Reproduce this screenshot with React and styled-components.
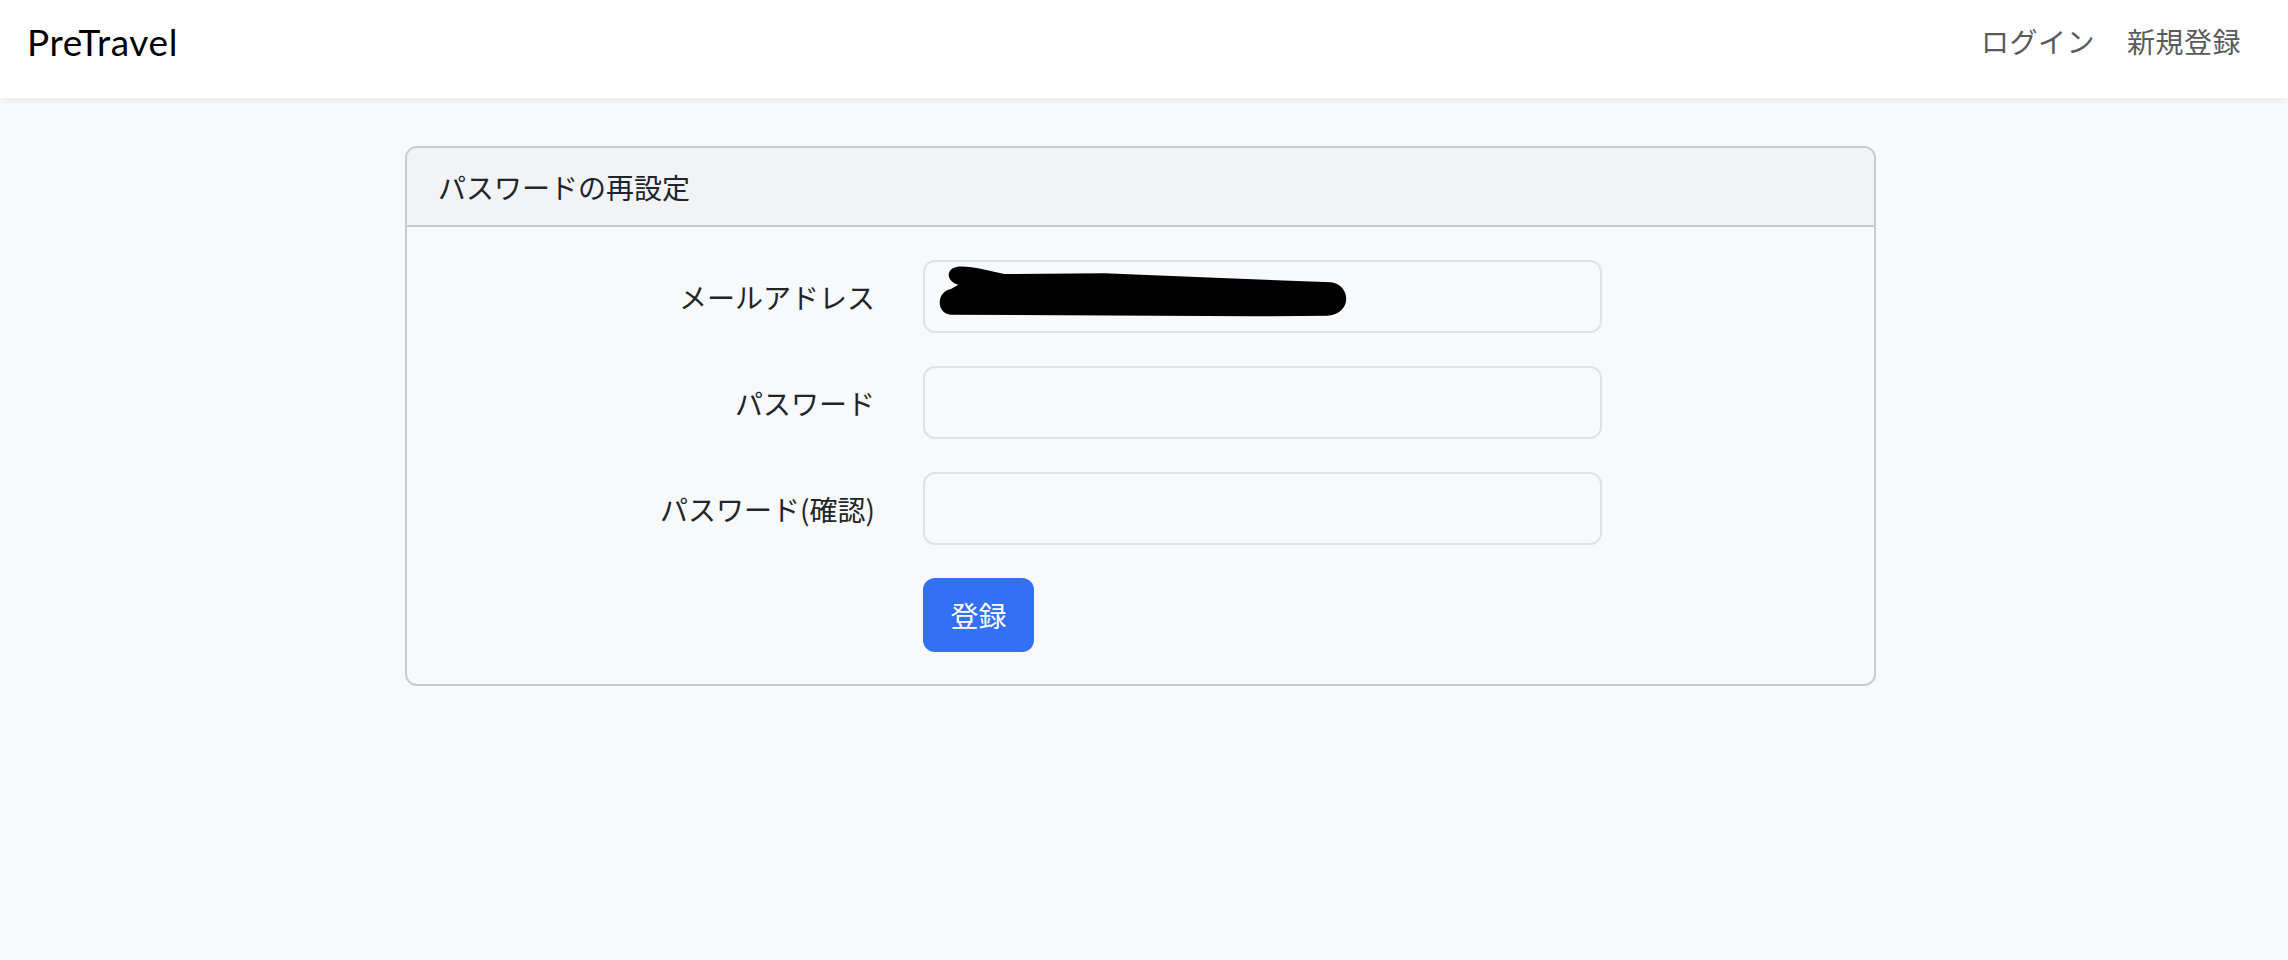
import React from "react";
import styled, { createGlobalStyle } from "styled-components";

const GlobalStyle = createGlobalStyle`
  html, body {
    margin: 0;
    padding: 0;
    background: #f8f9fb;
    font-family: "Noto Sans CJK JP", "Noto Sans", sans-serif;
    color: #212529;
  }
  * {
    box-sizing: border-box;
  }
`;

const Navbar = styled.nav`
  height: 98px;
  padding: 0 31px 16px 27px;
  background: #fff;
  display: flex;
  align-items: center;
  justify-content: space-between;
  box-shadow: 0 2px 8px rgba(0, 0, 0, 0.08);
  position: relative;
`;

const Brand = styled.a`
  font-family: "Lato", "Noto Sans", sans-serif;
  font-size: 37px;
  letter-spacing: 0.6px;
  color: #000;
  text-decoration: none;
  line-height: 1;
`;

const NavLinks = styled.div`
  display: flex;
  align-items: center;
`;

const NavLink = styled.a`
  font-size: 28px;
  letter-spacing: 0.5px;
  color: #5a5a5a;
  padding: 0 16px;
  text-decoration: none;
  line-height: 42px;
`;

const Main = styled.main`
  padding: 48px 7px 0 0;
`;

const Card = styled.section`
  width: 1471px;
  margin: 0 auto;
  border: 2px solid #c9cacd;
  border-radius: 12px;
  overflow: hidden;
  background: #f8f9fb;
`;

const CardHeader = styled.header`
  height: 79px;
  padding: 0 31px;
  display: flex;
  align-items: center;
  background: #f2f3f5;
  border-bottom: 2px solid #c9cacd;
  font-size: 28px;
`;

const CardBody = styled.div`
  padding: 33px 28px 32px;
  display: flex;
  flex-direction: column;
  gap: 33px;
`;

const Row = styled.div`
  display: grid;
  grid-template-columns: 440px 679px;
  column-gap: 48px;
  align-items: center;
`;

const Label = styled.label`
  text-align: right;
  font-size: 28px;
  line-height: 42px;
`;

const Field = styled.div`
  position: relative;
`;

const Input = styled.input`
  width: 100%;
  height: 73px;
  border: 2px solid #dfe1e6;
  border-radius: 12px;
  background: #f8f9fb;
  padding: 0 21px;
  font-size: 28px;
  outline: none;
`;

const Scribble = styled.svg`
  position: absolute;
  left: -2px;
  top: -6px;
  width: 440px;
  height: 85px;
  pointer-events: none;
`;

const Button = styled.button`
  width: 111px;
  height: 74px;
  border: none;
  border-radius: 12px;
  background: #3370f4;
  color: #fff;
  font-family: inherit;
  font-size: 28px;
  cursor: pointer;
`;

const fields = [
  { label: "メールアドレス", type: "email", redacted: true },
  { label: "パスワード", type: "password" },
  { label: "パスワード(確認)", type: "password" },
];

const App = () => (
  <>
    <GlobalStyle />
    <Navbar>
      <Brand href="#">PreTravel</Brand>
      <NavLinks>
        <NavLink href="#">ログイン</NavLink>
        <NavLink href="#">新規登録</NavLink>
      </NavLinks>
    </Navbar>
    <Main>
      <Card>
        <CardHeader>パスワードの再設定</CardHeader>
        <CardBody>
          {fields.map(({ label, type, redacted }) => (
            <Row key={label}>
              <Label>{label}</Label>
              <Field>
                <Input type={type} />
                {redacted && (
                  <Scribble viewBox="0 0 1320 255">
                    <path
                      d="M110 38 C150 35 200 50 250 60 L550 58 L900 72 L1230 85 C1290 92 1295 180 1220 185 L1000 187 L90 182 C45 180 45 112 90 105 L112 92 C78 86 70 44 110 38 Z"
                      fill="#000"
                    />
                  </Scribble>
                )}
              </Field>
            </Row>
          ))}
          <Row>
            <span />
            <div>
              <Button type="submit">登録</Button>
            </div>
          </Row>
        </CardBody>
      </Card>
    </Main>
  </>
);

export default App;
